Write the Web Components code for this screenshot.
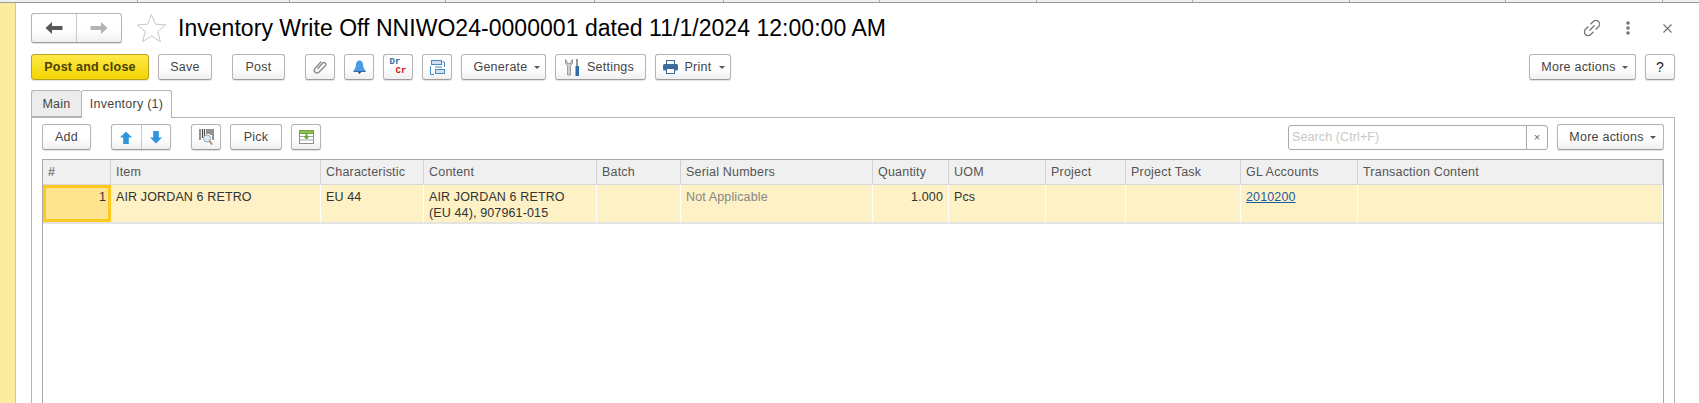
<!DOCTYPE html>
<html>
<head>
<meta charset="utf-8">
<title>Inventory Write Off</title>
<style>
  html, body { margin: 0; height: 100%; overflow: hidden; background: #fff; font-family: "Liberation Sans", Arial, sans-serif; }
  svg { flex: none; }
</style>
</head>
<body>
<iw-page></iw-page>

<script>
const icons = {
  back: '<svg width="18" height="12" viewBox="0 0 18 12" style="flex:none"><path d="M7 0 .5 6 7 12V8h10.500V4H7z" fill="#595959"/></svg>',
  forward: '<svg width="18" height="12" viewBox="0 0 18 12" style="flex:none"><path d="M11 0 17.500 6 11 12V8H.5V4H11z" fill="#b4b4b4"/></svg>',
  star: '<svg width="31" height="30" viewBox="0 0 31 30" style="flex:none"><path d="M15.500 1.500 19.400 11.200 29.800 11.900 21.700 18.500 24.400 28.600 15.500 23 6.600 28.600 9.300 18.500 1.200 11.900 11.600 11.200z" fill="#fff" stroke="#c4c8cc"/></svg>',
  clip: '<svg width="14" height="14" viewBox="0 0 14 14" style="flex:none"><path d="M4.600 8.800 9.600 3.200a1.800 1.800 0 0 1 2.700 2.500L5.800 12.300a2.700 2.700 0 0 1-3.900-3.700L8.300 1.500" fill="none" stroke="#8a8a8a" stroke-width="1.400"/></svg>',
  bell: '<svg width="13" height="14" viewBox="0 0 13 14" style="flex:none"><path d="M6.500 .5c2.300 0 3.400 1.800 3.500 4 .1 2.700.8 4.300 2.500 6v1H.5v-1C2.200 8.800 2.900 7.200 3 4.500 3.100 2.300 4.200 .5 6.500 .5z" fill="#4a9be0"/><path d="M.5 11.500h12" stroke="#2f6aa3"/><path d="M4.800 12h3.400L6.500 14z" fill="#27486b"/></svg>',
  tree: '<svg width="15" height="15" viewBox="0 0 15 15" style="flex:none" fill="#cfe1f0" stroke="#4b8abf"><rect x="1.500" y=".5" width="10" height="4"/><rect x="5.500" y="9.500" width="9" height="4"/><path d="M.5 6v8.500H4M14.500 7V2h-2M5 7h7" fill="none"/></svg>',
  settings: '<svg width="15" height="17" viewBox="0 0 15 17" style="flex:none"><path d="M.5 .5v4L2.500 6.500V16h3V6.500l2-2v-4L6 2v2.500H2V2z" fill="#d0d0d0" stroke="#8d8d8d" stroke-width=".8"/><rect x="11" y="0" width="2" height="7" fill="#9a9a9a"/><rect x="10.500" y="7" width="3.500" height="10" fill="#2f6ca8"/></svg>',
  print: '<svg width="15" height="14" viewBox="0 0 15 14" style="flex:none"><rect x="3.500" y=".5" width="8" height="4" fill="#fff" stroke="#3d6c99"/><rect x="0" y="4" width="15" height="6.500" rx="1.500" fill="#3d6c99"/><rect x="3.500" y="8.500" width="8" height="5" fill="#fff" stroke="#3d6c99"/></svg>',
  up: '<svg width="12" height="13" viewBox="0 0 12 13" style="flex:none"><path d="M6 .5 12 6.500H8.800V13H3.200V6.500H0z" fill="#2f95dc"/></svg>',
  down: '<svg width="12" height="13" viewBox="0 0 12 13" style="flex:none"><path d="M6 12.500 12 6.500H8.800V0H3.200V6.500H0z" fill="#2f95dc"/></svg>',
  barcode: '<svg width="15" height="16" viewBox="0 0 15 16" style="flex:none"><path d="M1 0v11M3.500 0v9M5.500 0v7M8 0v5M10 0v5M12 0v6M14 0v11" stroke="#4a4a4a" stroke-width="1.200" fill="none"/><circle cx="8" cy="9.500" r="3.500" fill="#dbe9f5" stroke="#8fa6bb"/><path d="M10.500 12l2.500 3.500" stroke="#b08a54" stroke-width="1.800"/></svg>',
  pick: '<svg width="15" height="14" viewBox="0 0 15 14" style="flex:none"><rect x=".5" y=".5" width="14" height="13" fill="#fff" stroke="#8f8f8f"/><rect x=".5" y=".5" width="14" height="3" fill="#8cc152" stroke="#6ea83c"/><path d="M1 6.500h13M1 10h13" stroke="#a5a5a5"/><path d="M6.500 4h2v2.500h2L7.500 9.500l-3-3h2z" fill="#5fae3a"/></svg>',
  link: '<svg width="20" height="20" viewBox="0 0 20 20" style="flex:none" fill="none" stroke="#777" stroke-width="1.300"><g transform="rotate(-45 10 10)"><path d="M8.500 6.300H4.500a3.700 3.700 0 0 0 0 7.400h4"/><path d="M11.500 6.300h4a3.700 3.700 0 0 1 0 7.400h-4"/><path d="M6.500 10h7"/></g></svg>',
  dots: '<svg width="4" height="14" viewBox="0 0 4 14" style="flex:none" fill="#777"><circle cx="2" cy="2" r="1.800"/><circle cx="2" cy="7" r="1.800"/><circle cx="2" cy="12" r="1.800"/></svg>',
  close: '<svg width="9" height="9" viewBox="0 0 9 9" style="flex:none"><path d="M.5 .5l8 8M8.500 .5l-8 8" stroke="#707070" stroke-width="1.100" fill="none"/></svg>'
};

class IwButton extends HTMLElement {
  constructor() {
    super();
    this.attachShadow({ mode: 'open' }).innerHTML = `
      <style>
        :host {
          display: inline-flex; align-items: center; justify-content: center; gap: 7px;
          box-sizing: border-box; height: 26px; padding: 0;
          background: linear-gradient(#fff 0%, #fff 55%, #f0f0f0 100%);
          border: 1px solid #b4b4b4; border-bottom-color: #9c9c9c; border-radius: 3px;
          box-shadow: 0 1px 1px rgba(0,0,0,.12);
          font: 12.500px "Liberation Sans", Arial, sans-serif; letter-spacing: .24px; color: #444;
          white-space: nowrap; flex: none;
        }
        :host([primary]) {
          background: linear-gradient(#ffe94a, #f3d400); border-color: #b9a11b;
          color: #4a4100; font-weight: bold;
        }
        :host([icon]) { width: 30px; }
        .caret { width: 0; height: 0; border: 3px solid transparent; border-top: 3px solid #555; border-bottom: 0; margin-left: var(--caret-gap, -1px); }
      </style>
      <slot></slot>${this.hasAttribute('caret') ? '<span class="caret"></span>' : ''}`;
  }
}

class IwPair extends HTMLElement {
  constructor() {
    super();
    this.attachShadow({ mode: 'open' }).innerHTML = `
      <style>
        :host {
          display: inline-flex; box-sizing: border-box; height: var(--pair-h, 26px);
          border: 1px solid #b4b4b4; border-bottom-color: #9c9c9c; border-radius: 3px;
          background: linear-gradient(#fff 55%, #f0f0f0); box-shadow: 0 1px 1px rgba(0,0,0,.12); flex: none;
        }
        .cell { display: flex; align-items: center; justify-content: center; width: var(--cell-w, 29px); }
        .cell + .cell { border-left: 1px solid #c8c8c8; }
      </style>
      <div class="cell"><slot name="a"></slot></div><div class="cell"><slot name="b"></slot></div>`;
  }
}

class IwHeader extends HTMLElement {
  constructor() {
    super();
    this.attachShadow({ mode: 'open' }).innerHTML = `
      <style>
        :host { display: flex; align-items: center; height: 30px; margin-bottom: 11px; }
        .star { margin-left: 14px; display: flex; }
        h1 { margin: 0 0 0 11px; font: normal 23px "Liberation Sans", Arial, sans-serif; letter-spacing: .035px; color: #000; white-space: nowrap; }
        .tools { margin-left: auto; display: flex; align-items: center; margin-right: 3px; }
        .tools span { display: flex; }
      </style>
      <iw-pair style="--pair-h:30px;--cell-w:44px">
        <span slot="a" style="display:flex">${icons.back}</span>
        <span slot="b" style="display:flex">${icons.forward}</span>
      </iw-pair>
      <span class="star">${icons.star}</span>
      <h1><slot></slot></h1>
      <div class="tools">
        <span>${icons.link}</span>
        <span style="margin-left:24px">${icons.dots}</span>
        <span style="margin-left:33px">${icons.close}</span>
      </div>`;
  }
}

class IwTable extends HTMLElement {
  constructor() {
    super();
    const cols = [
      ['#', 68], ['Item', 210], ['Characteristic', 103], ['Content', 173], ['Batch', 84],
      ['Serial Numbers', 192], ['Quantity', 76], ['UOM', 97], ['Project', 80], ['Project Task', 115],
      ['GL Accounts', 117], ['Transaction Content', 305]
    ];
    const row = [
      '<span class="num">1</span>', 'AIR JORDAN 6 RETRO', 'EU 44', 'AIR JORDAN 6 RETRO<br>(EU 44), 907961-015', '',
      '<span class="na">Not Applicable</span>', '<span class="num">1.000</span>', 'Pcs', '', '',
      '<a href="#">2010200</a>', ''
    ];
    this.attachShadow({ mode: 'open' }).innerHTML = `
      <style>
        :host {
          display: block; box-sizing: border-box; flex: 1; min-height: 0;
          margin-top: 9px; border: 1px solid #a9a9a9; border-width: 1px 1px 0;
          font: 12.500px "Liberation Sans", Arial, sans-serif; color: #333; background: #fff;
        }
        .row { display: grid; grid-template-columns: ${cols.map(c => c[1] + 'px').join(' ')}; width: max-content; }
        .head > div {
          box-sizing: border-box; height: 24px; line-height: 24px; padding: 0 5px;
          background: #f0f0f0; color: #555; border-right: 1px solid #d2d2d2; letter-spacing: .2px;
        }
        .body { border-top: 1px solid #d8d8d8; border-bottom: 2px solid #e4e4e4; }
        .body > div {
          box-sizing: border-box; height: 37px; padding: 4px 5px 0; line-height: 16px;
          background: #fdf1c5; border-right: 1px solid #fff; color: #333; letter-spacing: .13px;
        }
        .body > div.cur { background: #ffe48f; border: 3px solid #fdc91f; padding: 1px 2px 0; }
        .num { display: block; text-align: right; }
        .na { color: #888; }
        a { color: #1d5ba8; }
      </style>
      <div class="row head">${cols.map(c => `<div>${c[0]}</div>`).join('')}</div>
      <div class="row body">${row.map((t, i) => `<div class="${i ? '' : 'cur'}">${t}</div>`).join('')}</div>`;
  }
}

class IwPage extends HTMLElement {
  constructor() {
    super();
    const ticks = [138, 152, 156, 149, 129, 156, 157, 156, 157, 156, 157];
    this.attachShadow({ mode: 'open' }).innerHTML = `
      <style>
        :host { display: flex; flex-direction: column; height: 403px; width: 1699px; overflow: hidden; box-sizing: border-box; }
        .strip { height: 3px; box-sizing: border-box; flex: none; background: #f0f0f0; display: grid; grid-template-columns: ${ticks.map(t => t + 'px').join(' ')} 1fr; border-bottom: 1px solid #9c9c9c; }
        .strip i { border-right: 1px solid #aaa; }
        .main { flex: 1; display: flex; min-height: 0; }
        .side { width: 15px; flex: none; background: #fbeca0; border-right: 1px solid #dccb78; }
        .content { flex: 1; min-width: 0; padding: 10px 24px 0 15px; display: flex; flex-direction: column; }
        .bar { display: flex; align-items: center; height: 26px; gap: 9px; flex: none; }
        .spacer { margin-left: auto; }
        .tabs { display: flex; height: 27px; margin-top: 10px; flex: none; font: 12.500px "Liberation Sans", Arial, sans-serif; letter-spacing: .24px; color: #444; position: relative; z-index: 1; }
        .tab { box-sizing: border-box; height: 27px; line-height: 27px; text-align: center; border: 1px solid #b4b4b4; border-bottom: 0; border-radius: 3px 3px 0 0; }
        .tab.off { width: 50px; background: #ececec; border-right: 0; border-bottom: 1px solid #b4b4b4; }
        .tab.on { width: 91px; background: #fff; height: 28px; }
        .panel { flex: 1; min-height: 0; display: flex; flex-direction: column; box-sizing: border-box; border: 1px solid #b4b4b4; border-bottom: 0; padding: 6px 10px 0; }
        .search { display: flex; box-sizing: border-box; width: 260px; height: 25px; border: 1px solid #a9a9a9; border-radius: 3px; font: 12.500px "Liberation Sans", Arial, sans-serif; letter-spacing: .1px; color: #c8c8c8; }
        .search .field { flex: 1; line-height: 23px; padding-left: 3px; border-right: 1px solid #a9a9a9; }
        .search .clear { width: 20px; display: flex; align-items: center; justify-content: center; color: #666; font-size: 11px; }
      </style>
      <div class="strip">${ticks.map(() => '<i></i>').join('')}<i style="border:0"></i></div>
      <div class="main">
        <div class="side"></div>
        <div class="content">
          <iw-header>Inventory Write Off NNIWO24-0000001 dated 11/1/2024 12:00:00 AM</iw-header>
          <div class="bar">
            <iw-button primary style="width:118px">Post and close</iw-button>
            <iw-button style="width:54px">Save</iw-button>
            <iw-button style="width:53px;margin-left:11px">Post</iw-button>
            <iw-button icon style="margin-left:11px">${icons.clip}</iw-button>
            <iw-button icon>${icons.bell}</iw-button>
            <iw-button icon><span style="font:bold 9px 'Liberation Mono',monospace;line-height:9px;display:block;letter-spacing:0"><span style="color:#2f6ca8">Dr</span><br><span style="color:#d01010;margin-left:6px">Cr</span></span></iw-button>
            <iw-button icon>${icons.tree}</iw-button>
            <iw-button caret style="width:85px;padding-left:6px">Generate</iw-button>
            <iw-button style="width:91px;padding-right:2px">${icons.settings}Settings</iw-button>
            <iw-button caret style="width:76px;padding-left:2px;--caret-gap:1px">${icons.print}Print</iw-button>
            <iw-button caret class="spacer" style="width:107px;padding-left:4px">More actions</iw-button>
            <iw-button icon style="color:#222;font-size:14px">?</iw-button>
          </div>
          <div class="tabs"><div class="tab off">Main</div><div class="tab on">Inventory (1)</div></div>
          <div class="panel">
            <div class="bar">
              <iw-button style="width:49px">Add</iw-button>
              <iw-pair style="margin-left:11px;--cell-w:28.500px">
                <span slot="a" style="display:flex">${icons.up}</span>
                <span slot="b" style="display:flex">${icons.down}</span>
              </iw-pair>
              <iw-button icon style="margin-left:11px">${icons.barcode}</iw-button>
              <iw-button style="width:52px">Pick</iw-button>
              <iw-button icon>${icons.pick}</iw-button>
              <div class="search spacer"><div class="field">Search (Ctrl+F)</div><div class="clear">×</div></div>
              <iw-button caret style="width:107px;padding-left:4px">More actions</iw-button>
            </div>
            <iw-table></iw-table>
          </div>
        </div>
      </div>`;
  }
}

customElements.define('iw-button', IwButton);
customElements.define('iw-pair', IwPair);
customElements.define('iw-header', IwHeader);
customElements.define('iw-table', IwTable);
customElements.define('iw-page', IwPage);
</script>
</body>
</html>
